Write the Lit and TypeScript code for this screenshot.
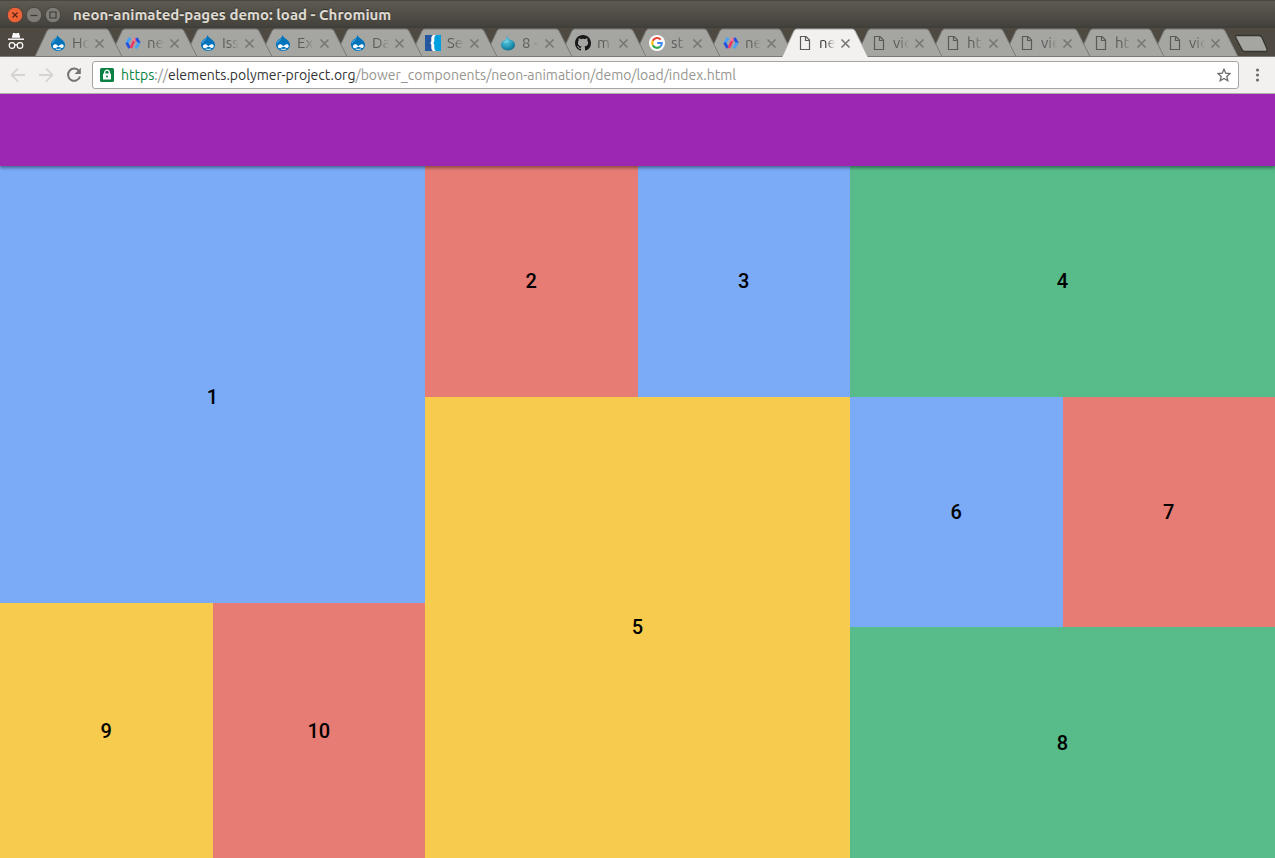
import { LitElement, html, css, svg, TemplateResult } from "lit";
import { customElement, property } from "lit/decorators.js";
import { classMap } from "lit/directives/class-map.js";

type IconName = "drupal" | "polymer" | "brace" | "drop" | "github" | "google" | "page";

const icons: Record<IconName, TemplateResult> = {
  drupal: svg`
    <path d="M7.2 0C8.2 2 10 3 11.8 4.4C13.8 5.9 15 7.6 15 9.8C15 13.4 12 16 8 16C4 16 1 13.2 1 9.6C1 7 2.4 5.2 4.4 4C6.2 3 7.2 2 7.2 0Z" fill="#0073ba"/>
    <path d="M1.8 7.2C3 4.8 5.4 4.4 7 3C6.4 5 4 5.8 2.6 8.4Z" fill="#3fa0dc"/>
    <path d="M8.2 11.2C6.8 9.6 5.8 9 4.4 9.4C2.6 10 2.4 12.8 4.4 13.2C6.2 13.4 7.2 11.8 8.6 11.8C9.8 11.8 10.6 13.2 12.2 13C14.2 12.6 14.2 9.6 12.4 9.2C10.8 8.8 9.6 10.2 8.2 11.2Z" fill="#fff"/>
    <path d="M5.8 14Q8.2 15.6 11 14Q8.4 14.7 5.8 14Z" fill="#fff" stroke="#fff" stroke-width=".5"/>`,
  polymer: svg`
    <path d="M5.2 2.8L1.8 8.2" fill="none" stroke="#4aa3f7" stroke-width="3"/>
    <path d="M1.6 7.6L4.6 13" fill="none" stroke="#2350e0" stroke-width="2.8"/>
    <path d="M10.4 3L5.8 13" fill="none" stroke="#f0356a" stroke-width="2.6"/>
    <path d="M8.6 3L11.4 3L9.8 6.4L7.4 5.6Z" fill="#ff7d92"/>
    <path d="M11.4 3L14.4 8.4" fill="none" stroke="#2350e0" stroke-width="2.8"/>
    <path d="M14.2 7.8L10.8 13.2" fill="none" stroke="#4aa3f7" stroke-width="3"/>`,
  brace: svg`
    <path d="M0 0H16V16H0Z" fill="#fff"/>
    <path d="M0 0H8Q6.3 1 6.3 3V6Q6.3 7.5 5 8Q6.3 8.5 6.3 10V13Q6.3 15 8 16H0Z" fill="#2556a0"/>
    <path d="M16 0H11Q9.3 1 9.3 3V6Q9.3 7.5 8 8Q9.3 8.5 9.3 10V13Q9.3 15 11 16H16Z" fill="#009fe0"/>`,
  drop: svg`
    <defs><radialGradient id="drop" cx=".4" cy=".35" r=".75">
      <stop offset="0" stop-color="#63cbe0"/><stop offset=".55" stop-color="#2a9dba"/><stop offset="1" stop-color="#086884"/>
    </radialGradient></defs>
    <path d="M6.2 0.6C8.2 1.4 8 3.6 10 4.6C12.8 5.6 15 7 15 9.8C15 13 12 15.4 8 15.4C4 15.4 1 13 1 9.8C1 7.4 3 6 5 5C6.8 4 7.2 2.2 6.2 0.6Z" fill="url(#drop)"/>
    <path d="M3 8.6Q6 5.4 9.4 6.6Q6 6.8 3 8.6Z" fill="#b5edf5"/>`,
  github: svg`
    <path fill="#191717" d="M8 0C3.58 0 0 3.58 0 8c0 3.54 2.29 6.53 5.47 7.59.4.07.55-.17.55-.38 0-.19-.01-.82-.01-1.49-2.01.37-2.53-.49-2.69-.94-.09-.23-.48-.94-.82-1.13-.28-.15-.68-.52-.01-.53.63-.01 1.08.58 1.23.82.72 1.21 1.87.87 2.33.66.07-.52.28-.87.51-1.07-1.78-.2-3.64-.89-3.64-3.95 0-.87.31-1.59.82-2.15-.08-.2-.36-1.02.08-2.12 0 0 .67-.21 2.2.82.64-.18 1.32-.27 2-.27s1.36.09 2 .27c1.53-1.04 2.2-.82 2.2-.82.44 1.1.16 1.92.08 2.12.51.56.82 1.27.82 2.15 0 3.07-1.87 3.75-3.65 3.95.29.25.54.73.54 1.48 0 1.07-.01 1.93-.01 2.2 0 .21.15.46.55.38A8.01 8.01 0 0 0 16 8c0-4.42-3.58-8-8-8z"/>`,
  google: svg`
    <circle cx="8" cy="8" r="8" fill="#fff"/>
    <g fill="none" stroke-width="2.1">
      <path d="M11.7 4.6A4.8 4.8 0 0 0 3.8 5.7" stroke="#ea4335"/>
      <path d="M3.8 5.7A4.8 4.8 0 0 0 3.8 10.3" stroke="#fbbc05"/>
      <path d="M3.8 10.3A4.8 4.8 0 0 0 11.3 11.6" stroke="#34a853"/>
      <path d="M11.3 11.6A4.8 4.8 0 0 0 12.8 8H8.2" stroke="#4285f4"/>
    </g>`,
  page: svg`
    <path d="M3.5 1.5H9L12.5 5V14.5H3.5Z" fill="none" stroke="#5a5a58" stroke-width="1.2"/>
    <path d="M8.5 1.5V5.5H12.5" fill="none" stroke="#5a5a58" stroke-width="1.2"/>`,
};

@customElement("browser-tab")
class BrowserTab extends LitElement {
  @property() icon: IconName = "page";
  @property() label = "";
  @property({ type: Boolean, reflect: true }) active = false;

  static styles = css`
    :host { flex: 1 1 0; min-width: 0; display: grid; height: 29px; position: relative; }
    .shape {
      position: absolute; top: 0; left: 0;
      width: calc(100% + 12px); height: 29px;
      pointer-events: none;
    }
    .fill { fill: #a5a5a2; }
    .edge { fill: none; stroke: #7b7a76; stroke-width: 1; vector-effect: non-scaling-stroke; }
    .active .fill { fill: #f2f1f0; }
    .active .edge { stroke: #a9a8a4; }
    .body {
      position: relative; display: flex; align-items: center;
      padding: 1px 0 0 15px; min-width: 0;
    }
    .tab {
      display: flex; align-items: center; gap: 6px;
      flex: 1 1 0; min-width: 0; padding: 0; border: 0;
      background: none; color: #5c5c5a; text-align: left;
      font: 15px/20px Ubuntu, "Noto Sans", sans-serif;
    }
    .active .tab { color: #333; }
    .favicon { flex: none; width: 16px; height: 16px; }
    .label {
      flex: 1 1 0; min-width: 0; overflow: hidden; white-space: nowrap;
      mask-image: linear-gradient(to right, #000 40%, transparent 100%);
    }
    .close { flex: none; width: 21px; height: 16px; padding: 0 0 0 5px; border: 0; background: none; display: flex; align-items: center; }
    .close svg { width: 11px; height: 11px; }
  `;

  render() {
    return html`
      <svg class=${classMap({ shape: true, active: this.active })} viewBox="0 0 87 29" preserveAspectRatio="none" aria-hidden="true">
        <path class="fill" d="M0 29L12 3Q13 1 15 1H71Q73 1 74 3L87 29Z"/>
        <path class="edge" d=${this.active ? "M0 29L12 3Q13 1 15 1H71Q73 1 74 3L87 29" : "M0 28.5H87L74 3Q73 1 71 1H15Q13 1 12 3L0 28.5"}/>
      </svg>
      <div class=${classMap({ body: true, active: this.active })}>
        <button class="tab" role="tab" aria-selected=${this.active}>
          <svg class="favicon" viewBox="0 0 16 16">${icons[this.icon]}</svg>
          <span class="label">${this.label}</span>
        </button>
        <button class="close" aria-label="Close tab">
          <svg viewBox="0 0 11 11"><path d="M1.5 1.5L9.5 9.5M9.5 1.5L1.5 9.5" stroke="#777774" stroke-width="1.7"/></svg>
        </button>
      </div>
    `;
  }
}

interface Tab { icon: IconName; label: string; active?: boolean; }

const tabs: Tab[] = [
  { icon: "drupal", label: "Ho" },
  { icon: "polymer", label: "ne" },
  { icon: "drupal", label: "Iss" },
  { icon: "drupal", label: "Ex" },
  { icon: "drupal", label: "Da" },
  { icon: "brace", label: "Se" },
  { icon: "drop", label: "8 -" },
  { icon: "github", label: "m" },
  { icon: "google", label: "st" },
  { icon: "polymer", label: "ne" },
  { icon: "page", label: "ne", active: true },
  { icon: "page", label: "vie" },
  { icon: "page", label: "ht" },
  { icon: "page", label: "vie" },
  { icon: "page", label: "ht" },
  { icon: "page", label: "vie" },
];

const url = {
  scheme: "https",
  separator: "://",
  host: "elements.polymer-project.org",
  path: "/bower_components/neon-animation/demo/load/index.html",
};

@customElement("app-root")
class AppRoot extends LitElement {
  static styles = css`
    :host {
      display: flex; flex-direction: column; min-height: 100vh;
      font-family: Ubuntu, "Noto Sans", sans-serif;
    }
    * { box-sizing: border-box; }

    .titlebar {
      display: flex; align-items: center; height: 28px; padding: 0 7px;
      background: linear-gradient(#5d5a51, #45433d 90%, #3d3c37);
      border-top: 1px solid #4a4740;
    }
    .controls { display: flex; gap: 3px; }
    .control { width: 16px; height: 16px; padding: 0; border: 0; background: none; display: flex; }
    .control svg { width: 16px; height: 16px; }
    .title {
      margin: 0 0 0 12px; color: #dfdbd2;
      font: bold 15px/20px Ubuntu, "Noto Sans", sans-serif; white-space: nowrap;
      text-shadow: 0 -1px 0 #33322d;
    }

    .strip { display: flex; height: 29px; background: #4e4a42; border-bottom: 1px solid #7b7a76; }
    .incognito { flex: none; width: 35px; height: 28px; padding: 4px 0 0 7px; }
    .incognito svg { width: 18px; height: 18px; display: block; }
    .tabs { flex: 1; display: flex; min-width: 0; }
    .tabs browser-tab { flex-grow: 74; }
    .tabs browser-tab:nth-child(-n + 7) { flex-grow: 75; }
    .newtab { flex: none; width: 49px; padding: 6px 0 0 8px; border: 0; background: none; display: flex; align-items: flex-start; }
    .newtab svg { width: 36px; height: 19px; display: block; }

    .toolbar {
      display: flex; align-items: center; height: 37px; padding: 0 8px;
      background: #f2f1f0; border-bottom: 1px solid #b5b3b0;
    }
    .tool { flex: none; width: 28px; height: 28px; padding: 0; border: 0; background: none; display: flex; align-items: center; justify-content: center; }
    .tool svg { width: 18px; height: 18px; }
    .tool.nav { justify-content: flex-start; padding-left: 1px; }
    .omnibox {
      flex: 1; min-width: 0; display: flex; align-items: center; height: 28px;
      padding: 0 7px; border: 1px solid #a6a5a3; border-radius: 3px; background: #fff;
    }
    .lock, .star { flex: none; width: 14px; height: 14px; }
    .address { flex: 1; min-width: 0; display: grid; margin: 0 7px; font-size: 14px; line-height: 20px; white-space: nowrap; }
    .field, .pretty { grid-area: 1 / 1; min-width: 0; overflow: hidden; }
    .field {
      padding: 0; border: 0; outline: 0; background: none; font: inherit;
      color: transparent; caret-color: #333;
    }
    .pretty { pointer-events: none; color: #96958f; }
    .scheme { color: #0b8043; }
    .host { color: #333; }
    .starbutton { flex: none; padding: 0; border: 0; background: none; display: flex; }
    .tool.menu { width: 18px; margin-left: 10px; }

    .header {
      height: 72px; background: #9c27b0; position: relative; z-index: 1;
      box-shadow: 0 2px 3px rgba(0, 0, 0, .4);
    }
    .board {
      flex: 1; display: grid; grid-template-columns: repeat(3, 1fr);
      font: 500 20px/28px Roboto, sans-serif; color: #000;
    }
    .column { display: grid; grid-template-columns: 1fr 1fr; }
    .first { grid-template-rows: 12fr 7fr; }
    .second { grid-template-rows: 1fr 2fr; }
    .third { grid-template-rows: 1fr 1fr 1fr; }
    .cell { display: flex; align-items: center; justify-content: center; }
    .wide { grid-column: span 2; }
    .hero { padding-top: 24px; }
    .blue { background: #7baaf7; }
    .red { background: #e67c73; }
    .yellow { background: #f7cb4d; }
    .green { background: #57bb8a; }
  `;

  render() {
    return html`
      <header class="titlebar">
        <div class="controls">
          <button class="control" aria-label="Close"><svg viewBox="0 0 16 16"><circle cx="8" cy="8" r="7.7" fill="#ee6438" stroke="#3b3a35" stroke-width=".7"/><path d="M5.5 5.5L10.5 10.5M10.5 5.5L5.5 10.5" stroke="#5a2412" stroke-width="1.2"/></svg></button>
          <button class="control" aria-label="Minimize"><svg viewBox="0 0 16 16"><circle cx="8" cy="8" r="7.7" fill="#7e7c74" stroke="#3b3a35" stroke-width=".7"/><path d="M4.5 8.5H11.5" stroke="#3b3a35" stroke-width="1.2"/></svg></button>
          <button class="control" aria-label="Maximize"><svg viewBox="0 0 16 16"><circle cx="8" cy="8" r="7.7" fill="#7e7c74" stroke="#3b3a35" stroke-width=".7"/><path d="M5 5H11V11H5Z" fill="none" stroke="#3b3a35" stroke-width="1.1"/></svg></button>
        </div>
        <h1 class="title">neon-animated-pages demo: load - Chromium</h1>
      </header>

      <div class="strip">
        <div class="incognito">
          <svg viewBox="0 0 18 18" aria-hidden="true">
            <path d="M4.8 5.8L6 1H7.5L9 1.6L10.5 1H12L13.2 5.8Z" fill="#fff"/>
            <path d="M1 7.2H17" stroke="#fff" stroke-width="1.4"/>
            <circle cx="5" cy="13.5" r="2.8" fill="none" stroke="#fff" stroke-width="1.2"/>
            <circle cx="13" cy="13.5" r="2.8" fill="none" stroke="#fff" stroke-width="1.2"/>
            <path d="M7.7 13.2Q9 12 10.3 13.2" fill="none" stroke="#fff" stroke-width="1.2"/>
          </svg>
        </div>
        <div class="tabs" role="tablist">
          ${tabs.map(
            (tab, i) => html`<browser-tab
              style="z-index:${tab.active ? tabs.length + 1 : tabs.length - i}"
              .icon=${tab.icon} .label=${tab.label} .active=${!!tab.active}></browser-tab>`
          )}
        </div>
        <button class="newtab" aria-label="New tab">
          <svg viewBox="0 0 36 19"><path d="M3 1.5H25Q27 1.5 28 3.5L33 15Q33.5 17.5 31 17.5H11Q9 17.5 8 15.5L2 4Q1 1.5 3 1.5Z" fill="#a5a5a2" stroke="#37352f" stroke-width="1.3"/></svg>
        </button>
      </div>

      <nav class="toolbar">
        <button class="tool nav" aria-label="Back"><svg viewBox="0 0 18 18"><path d="M16 9H3M9 2.5L2.5 9L9 15.5" fill="none" stroke="#d5d4d2" stroke-width="1.8"/></svg></button>
        <button class="tool nav" aria-label="Forward"><svg viewBox="0 0 18 18"><path d="M2 9H15M9 2.5L15.5 9L9 15.5" fill="none" stroke="#d5d4d2" stroke-width="1.8"/></svg></button>
        <button class="tool nav" aria-label="Reload"><svg viewBox="0 0 18 18"><path d="M14 5A6.1 6.1 0 1 0 15 10.5" fill="none" stroke="#737371" stroke-width="2"/><path d="M15.8 1.8V8H9.6Z" fill="#737371"/></svg></button>
        <div class="omnibox">
          <svg class="lock" viewBox="0 0 14 14" aria-hidden="true">
            <rect width="14" height="14" rx="1.5" fill="#0b8043"/>
            <path d="M4.7 6V4.5A2.3 2.3 0 0 1 9.3 4.5V6" fill="none" stroke="#fff" stroke-width="1.3"/>
            <rect x="3" y="5.6" width="8" height="6" rx=".6" fill="#fff"/>
            <circle cx="7" cy="8.6" r="1" fill="#0b8043"/>
          </svg>
          <div class="address">
            <input class="field" type="text" aria-label="Address" spellcheck="false" .value=${url.scheme + url.separator + url.host + url.path}>
            <span class="pretty" aria-hidden="true"><span class="scheme">${url.scheme}</span>${url.separator}<span class="host">${url.host}</span>${url.path}</span>
          </div>
          <button class="starbutton" aria-label="Bookmark this page">
            <svg class="star" viewBox="0 0 14 14"><path d="M7 1.2L8.7 5.2L13 5.6L9.8 8.4L10.8 12.7L7 10.4L3.2 12.7L4.2 8.4L1 5.6L5.3 5.2Z" fill="none" stroke="#6a6a68" stroke-width="1.3"/></svg>
          </button>
        </div>
        <button class="tool menu" aria-label="Menu"><svg viewBox="0 0 18 18"><g fill="#6e6d6b"><circle cx="8.5" cy="4" r="1.6"/><circle cx="8.5" cy="9" r="1.6"/><circle cx="8.5" cy="14" r="1.6"/></g></svg></button>
      </nav>

      <div class="header"></div>
      <main class="board">
        <div class="column first">
          <div class="cell wide hero blue">1</div>
          <div class="cell yellow">9</div>
          <div class="cell red">10</div>
        </div>
        <div class="column second">
          <div class="cell red">2</div>
          <div class="cell blue">3</div>
          <div class="cell wide yellow">5</div>
        </div>
        <div class="column third">
          <div class="cell wide green">4</div>
          <div class="cell blue">6</div>
          <div class="cell red">7</div>
          <div class="cell wide green">8</div>
        </div>
      </main>
    `;
  }
}
